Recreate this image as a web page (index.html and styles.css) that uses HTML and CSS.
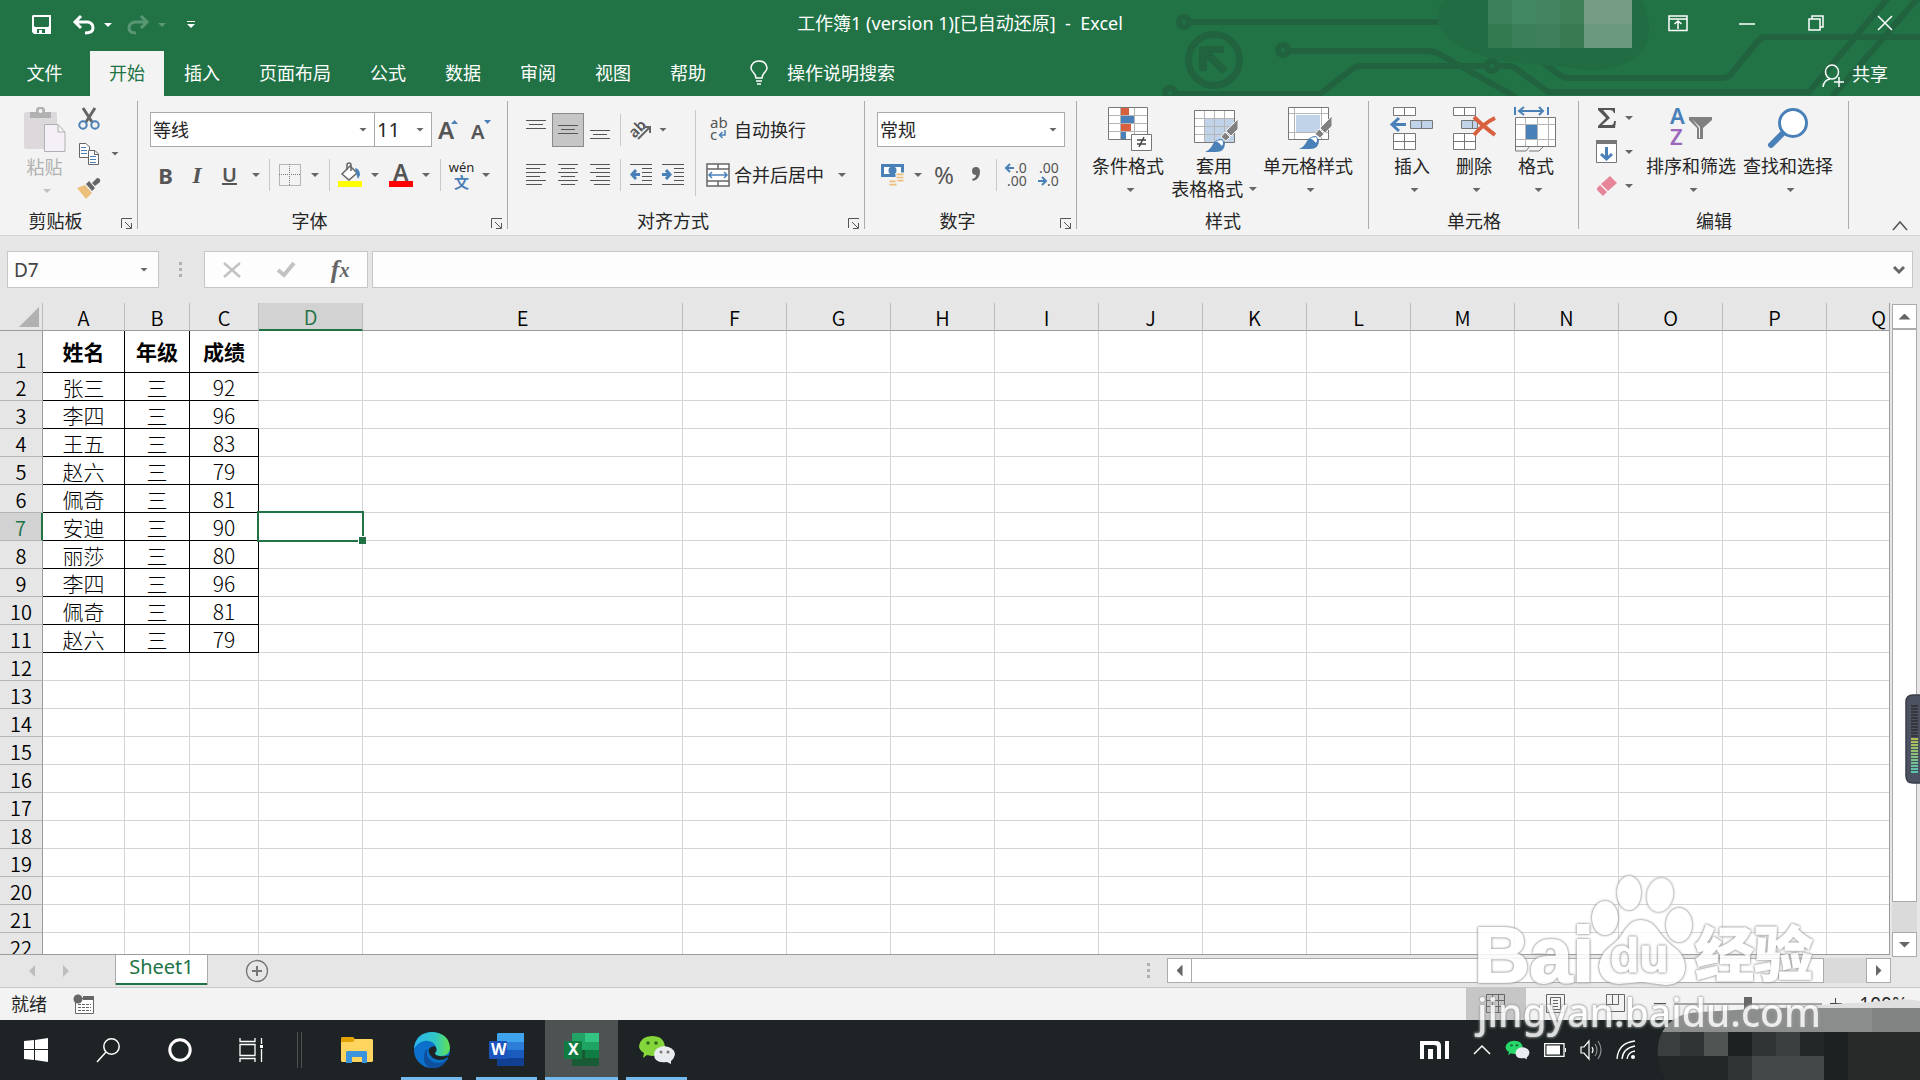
FILE: index.html
```html
<!DOCTYPE html>
<html lang="zh-CN">
<head>
<meta charset="utf-8">
<title>工作簿1 - Excel</title>
<link rel="stylesheet" href="styles.css">
</head>
<body>
<header class="top">
  <svg class="circuit" viewBox="1160 0 760 96" width="760" height="96" aria-hidden="true">
    <g fill="none" stroke="#22633f" stroke-width="6">
      <circle cx="1184" cy="22" r="5"/><path d="M1191 22H1438"/>
      <circle cx="1214" cy="60" r="25.500" stroke-width="7"/>
      <circle cx="1283" cy="50" r="5"/><path d="M1290 51H1428Q1433 51 1437 53L1516 97"/>
      <circle cx="1170" cy="93" r="5"/><path d="M1176 94H1320L1351 70Q1356 66 1361 66H1486"/>
      <circle cx="1492" cy="66" r="5"/><path d="M1498 66H1508Q1513 66 1518 70L1548 92H1809L1888 -2"/>
      <path d="M1542 62L1558 74Q1564 78 1570 78H1722Q1729 78 1732 73L1758 41Q1761 37 1766 37H1920"/>
      <path d="M1832 97L1918 -2"/>
    </g>
    <path fill="#22633f" d="M1199 46h25v7h-12l16 16-6 5-15-15v12h-8z"/>
    <path fill="#226c43" d="M1438 22Q1438 0 1446 0H1640Q1649 10 1649 28Q1649 50 1632 60Q1610 71 1590 71L1560 66Q1450 62 1438 22z"/>
    <path fill="#3b805a" d="M1488 0h24v24h-24z"/><path fill="#428860" d="M1512 0h24v24h-24z"/><path fill="#44845f" d="M1536 0h24v24h-24z"/><path fill="#3f8058" d="M1560 0h24v24h-24z"/>
    <path fill="#31794f" d="M1488 24h24v24h-24z"/><path fill="#3a7f58" d="M1512 24h24v24h-24z"/><path fill="#3f805a" d="M1536 24h24v24h-24z"/><path fill="#397a53" d="M1560 24h24v24h-24z"/>
    <path fill="#759d86" d="M1584 0h48v24h-48z"/><path fill="#6a987e" d="M1584 24h48v24h-48z"/>
  </svg>
  <div class="titlebar">
    <div class="quick">
      <button aria-label="保存"><svg width="20" height="20" viewBox="0 0 20 20"><path fill="#fff" fill-rule="evenodd" d="M1 0H19V19H2L0 17V1zM2 2V11L3 12H16L17 11V2zM5 14V18H7V15H10V18H13V14z"/></svg></button>
      <button aria-label="撤消"><svg width="23" height="20" viewBox="0 0 23 20"><path fill="none" stroke="#fff" stroke-width="3" d="M8 1L2 7L8 13M3 7H15Q20 8 20 13Q20 18 12 18"/></svg></button>
      <i class="ar white"></i>
      <button aria-label="恢复" class="faded"><svg width="23" height="20" viewBox="0 0 23 20"><path fill="none" stroke="#fff" stroke-width="3" d="M14 1L20 7L14 13M19 7H8Q2 8 2 13Q2 18 9 18"/></svg></button>
      <i class="ar white faded"></i>
      <button class="custom" aria-label="自定义快速访问工具栏"><svg width="8" height="8" viewBox="0 0 8 8"><path fill="#fff" d="M0 0h8v1H0zM0 3h8L4 7z"/></svg></button>
    </div>
    <h1>工作簿1 (version 1)[已自动还原] &nbsp;- &nbsp;Excel</h1>
    <div class="winbtns">
      <button aria-label="功能区显示选项"><svg width="20" height="17" viewBox="0 0 20 17"><path fill="none" stroke="#fff" stroke-width="1.500" d="M1 1H19V15.500H1zM1 4H19M10 14V6M6.500 9L10 6L13.500 9"/></svg></button>
      <button aria-label="最小化"><svg width="16" height="16" viewBox="0 0 16 16"><path stroke="#fff" stroke-width="1.500" d="M0 9H16"/></svg></button>
      <button aria-label="向下还原"><svg width="16" height="16" viewBox="0 0 16 16"><path fill="none" stroke="#fff" stroke-width="1.500" d="M1 4H12V15H1zM4 4V1H15V12H12"/></svg></button>
      <button aria-label="关闭"><svg width="16" height="16" viewBox="0 0 16 16"><path stroke="#fff" stroke-width="1.500" d="M1 1L15 15M15 1L1 15"/></svg></button>
    </div>
  </div>
  <nav class="tabs">
    <button class="file">文件</button><button class="on">开始</button><button>插入</button><button>页面布局</button><button>公式</button><button>数据</button><button>审阅</button><button>视图</button><button>帮助</button>
    <button class="tell"><svg width="18" height="26" viewBox="0 0 18 26"><path fill="none" stroke="#fff" stroke-width="1.500" d="M6 18Q6 15 3 12Q1 10 1 8Q2 1 9 1T17 8Q17 10 15 12Q12 15 12 18zM6 21H12M7 24H11"/></svg>操作说明搜索</button>
    <button class="share"><svg width="22" height="24" viewBox="0 0 22 24"><g fill="none" stroke="#fff" stroke-width="1.500"><ellipse cx="10" cy="8" rx="6.500" ry="7"/><path d="M1 23Q2 16 8 15M12 18H22M17 13V23"/></g></svg>共享</button>
  </nav>
</header>

<section class="ribbon">
  <div class="group g-clip">
    <div class="body">
      <button class="big paste" disabled><svg width="42" height="45" viewBox="0 0 42 45"><rect x="0" y="5" width="33" height="37" rx="2" fill="#dcd8dc"/><path fill="#b1b1b1" d="M6 5h6V2l2-2h5l2 2v3h6v6H6z"/><circle cx="16.500" cy="4" r="2" fill="#f3f3f3"/><path fill="#f5f0f7" stroke="#b1b1b1" d="M20.500 17.500H34L41 25V44.500H20.500zM34 17.500V25H41"/></svg><span>粘贴</span><i class="ar"></i></button>
      <div class="stack">
        <div><button aria-label="剪切"><svg width="22" height="24" viewBox="0 0 22 24"><path stroke="#666" stroke-width="3" d="M5 1L14 15M17 1L8 15"/><g fill="none" stroke="#4a80b8" stroke-width="2"><circle cx="5" cy="18" r="3.700"/><circle cx="17" cy="18" r="3.700"/></g></svg></button></div>
        <div><button aria-label="复制"><svg width="22" height="24" viewBox="0 0 22 24"><g fill="#fff" stroke="#666"><path d="M1.500 1.500H8L11.500 5V15.500H1.500z"/><path d="M10.500 8.500H17L20.500 12V22.500H10.500zM16.500 8.500V12.500H20.500"/></g><path stroke="#4a80b8" d="M3 5.500H8M3 8.500H9M3 11.500H9M12 14.500H18M12 17.500H18M12 20.500H18"/></svg></button><i class="ar"></i></div>
        <div><button aria-label="格式刷"><svg width="24" height="22" viewBox="0 0 24 22"><path fill="#ecc07a" d="M0 10L8 7L15 15L9 21z"/><path fill="#666" d="M9 6L12 3L18 10L15 13zM15 5L20 0Q24 0 23 4L18 8z"/></svg></button></div>
      </div>
    </div>
    <div class="glabel"><span>剪贴板</span><button class="launch" aria-label="剪贴板设置"><svg width="12" height="12" viewBox="0 0 12 12"><path fill="none" stroke="#555" d="M.5 10V.5H11M4 4L10 10M10.500 5V10.500H5"/></svg></button></div>
  </div>

  <div class="group g-font">
    <div class="body rows">
      <div class="r1">
        <label class="combo c-font"><select aria-label="字体"><option>等线</option></select><i class="ar"></i></label><label class="combo c-size"><select aria-label="字号"><option>11</option></select><i class="ar"></i></label>
        <button class="grow" aria-label="增大字号"><svg width="22" height="24" viewBox="0 0 22 24"><text x="0" y="21" class="ltr" font-size="24">A</text><path fill="#4a80b8" d="M13 6h7l-3.500-4z"/></svg></button>
        <button class="grow" aria-label="减小字号"><svg width="22" height="24" viewBox="0 0 22 24"><text x="0" y="21" class="ltr" font-size="20">A</text><path fill="#4a80b8" d="M13 2h7l-3.500 4z"/></svg></button>
      </div>
      <div class="r2 font2">
        <button class="b">B</button><button class="it">I</button><button class="u">U</button><i class="ar"></i><i class="vs"></i>
        <button aria-label="边框"><svg width="22" height="22" viewBox="0 0 22 22"><path fill="none" stroke="#777" stroke-dasharray="1 1" d="M.5 .5H21.500V21.500H.5zM10.500 0V22M0 10.500H22"/></svg></button><i class="ar"></i><i class="vs"></i>
        <button aria-label="填充颜色"><svg width="24" height="26" viewBox="0 0 24 26"><path fill="#fff" stroke="#666" stroke-width="1.500" d="M4 12L12 4L19 11L11 18z"/><path fill="none" stroke="#666" stroke-width="1.500" d="M9 8V3Q9 1 11 1T13 3V9"/><path fill="#4a80b8" d="M17 6Q22 7 22 13L20 17Q18 12 17 6z"/><path fill="#ff0" d="M0 19h24v6H0z"/></svg></button><i class="ar"></i>
        <button aria-label="字体颜色"><svg width="24" height="26" viewBox="0 0 24 26"><text x="4" y="19" class="ltr" font-size="23">A</text><path fill="red" d="M0 19h24v6H0z"/></svg></button><i class="ar"></i><i class="vs"></i>
        <button class="wen" aria-label="拼音"><span>wén</span><b>文</b></button><i class="ar"></i>
      </div>
    </div>
    <div class="glabel"><span>字体</span><button class="launch" aria-label="字体设置"><svg width="12" height="12" viewBox="0 0 12 12"><path fill="none" stroke="#555" d="M.5 10V.5H11M4 4L10 10M10.500 5V10.500H5"/></svg></button></div>
  </div>

  <div class="group g-align">
    <div class="body">
      <div class="rows">
        <div class="r1 al">
          <button aria-label="顶端对齐"><svg width="20" height="22" viewBox="0 0 20 22"><path stroke="#555" d="M0 1.500H20M3 5.500H17M0 9.500H20"/></svg></button>
          <button class="sel" aria-label="垂直居中"><svg width="20" height="22" viewBox="0 0 20 22"><path stroke="#555" d="M0 6.500H20M3 10.500H17M0 14.500H20"/></svg></button>
          <button aria-label="底端对齐"><svg width="20" height="22" viewBox="0 0 20 22"><path stroke="#555" d="M0 11.500H20M3 15.500H17M0 19.500H20"/></svg></button>
          <i class="vs"></i>
          <button aria-label="方向"><svg width="22" height="22" viewBox="0 0 22 22"><text x="0" y="15" class="ltr" font-size="15" transform="rotate(-45 8 12)">ab</text><path fill="none" stroke="#666" stroke-width="2" d="M8 20L19 9M13 8H20V14"/></svg></button><i class="ar"></i>
        </div>
        <div class="r2 al al2">
          <button aria-label="左对齐"><svg width="20" height="22" viewBox="0 0 20 22"><path stroke="#555" d="M0 .5H20M0 4.500H14M0 8.500H20M0 12.500H14M0 16.500H20M0 20.500H16"/></svg></button>
          <button aria-label="居中"><svg width="20" height="22" viewBox="0 0 20 22"><path stroke="#555" d="M0 .5H20M3 4.500H17M0 8.500H20M3 12.500H17M0 16.500H20M3 20.500H17"/></svg></button>
          <button aria-label="右对齐"><svg width="20" height="22" viewBox="0 0 20 22"><path stroke="#555" d="M0 .5H20M6 4.500H20M0 8.500H20M6 12.500H20M0 16.500H20M4 20.500H20"/></svg></button>
          <i class="vs"></i>
          <button aria-label="减少缩进量"><svg width="22" height="22" viewBox="0 0 22 22"><path stroke="#555" d="M0 .5H22M12 4.500H22M12 8.500H22M12 12.500H22M12 16.500H22M0 20.500H22"/><path fill="none" stroke="#4a80b8" stroke-width="3" d="M6 6L2 10.500L6 15M2 10.500H10"/></svg></button>
          <button aria-label="增加缩进量"><svg width="22" height="22" viewBox="0 0 22 22"><path stroke="#555" d="M0 .5H22M12 4.500H22M12 8.500H22M12 12.500H22M12 16.500H22M0 20.500H22"/><path fill="none" stroke="#4a80b8" stroke-width="3" d="M4 6L8 10.500L4 15M0 10.500H8"/></svg></button>
        </div>
      </div>
      <i class="vs tall"></i>
      <div class="rows">
        <button class="r1 wide"><svg width="24" height="26" viewBox="0 0 24 26"><text x="4" y="11" class="ltr reg" font-size="15">ab</text><text x="4" y="23" class="ltr reg" font-size="15">c</text><path fill="none" stroke="#4a80b8" stroke-width="1.500" d="M19 13V18H14M16.500 15L13.500 18L16.500 21"/></svg>自动换行</button>
        <button class="r2 wide"><svg width="24" height="24" viewBox="0 0 24 24"><path fill="#fff" stroke="#666" stroke-width="1.500" d="M1 1H23V23H1zM1 6H23M1 18H23M12 1V6M12 18V23"/><path fill="none" stroke="#4a80b8" stroke-width="1.500" d="M3 12H21M6 9L3 12L6 15M18 9L21 12L18 15"/></svg>合并后居中<i class="ar"></i></button>
      </div>
    </div>
    <div class="glabel"><span>对齐方式</span><button class="launch" aria-label="对齐设置"><svg width="12" height="12" viewBox="0 0 12 12"><path fill="none" stroke="#555" d="M.5 10V.5H11M4 4L10 10M10.500 5V10.500H5"/></svg></button></div>
  </div>

  <div class="group g-num">
    <div class="body rows">
      <div class="r1"><label class="combo c-num"><select aria-label="数字格式"><option>常规</option></select><i class="ar"></i></label></div>
      <div class="r2 num2">
        <button aria-label="会计数字格式"><svg width="24" height="24" viewBox="0 0 24 24"><path fill="#4a80b8" d="M0 1h23v13H0z"/><path fill="#fff" d="M3 4h17v7H3z"/><circle cx="11.500" cy="7.500" r="4" fill="#4a80b8"/><path fill="#ecc07a" stroke="#f3f3f3" d="M15 10h8v3h-8zM15 13h8v3h-8zM15 16h8v3h-8zM8 17h8v3H8zM8 20h8v3H8z"/></svg></button><i class="ar"></i>
        <button class="pct">%</button>
        <button aria-label="千位分隔样式"><svg width="10" height="16" viewBox="0 0 10 16"><path fill="#666" d="M5 0Q9 0 9 5Q9 12 2 14L1 12Q5 11 5 8Q1 8 1 4Q1 0 5 0z"/></svg></button>
        <i class="vs"></i>
        <button aria-label="增加小数位数"><svg width="24" height="26" viewBox="0 0 24 26"><text x="10" y="11" class="ltr reg" font-size="14">.0</text><text x="2" y="24" class="ltr reg" font-size="14">.00</text><path fill="none" stroke="#4a80b8" stroke-width="2" d="M5 2L1 6L5 10M1 6H9"/></svg></button>
        <button aria-label="减少小数位数"><svg width="24" height="26" viewBox="0 0 24 26"><text x="2" y="11" class="ltr reg" font-size="14">.00</text><text x="10" y="24" class="ltr reg" font-size="14">.0</text><path fill="none" stroke="#4a80b8" stroke-width="2" d="M5 15L9 19L5 23M1 19H9"/></svg></button>
      </div>
    </div>
    <div class="glabel"><span>数字</span><button class="launch" aria-label="数字设置"><svg width="12" height="12" viewBox="0 0 12 12"><path fill="none" stroke="#555" d="M.5 10V.5H11M4 4L10 10M10.500 5V10.500H5"/></svg></button></div>
  </div>

  <div class="group g-style">
    <div class="body">
      <button class="big"><svg width="44" height="44" viewBox="0 0 44 44"><path fill="#fff" d="M0 0h40v33H0z"/><path stroke="#b5b5b5" fill="none" d="M0 8.500H40M0 16.500H40M0 24.500H40M12.500 0V33M26.500 0V33"/><path fill="none" stroke="#777" d="M.5 .5H39.500V32.500H.5z"/><path fill="#d9603f" d="M13 1h8v7h-8zM13 17h10v7H13z"/><path fill="#4a80b8" d="M13 9h13v7H13zM13 25h5v7h-5z"/><path fill="#fff" stroke="#777" d="M23.500 27.500h20v16h-20z"/><path fill="none" stroke="#444" stroke-width="1.500" d="M29 33H38M29 37H38M36 30L31 40"/></svg><span>条件格式</span><i class="ar"></i></button>
      <button class="big"><svg width="44" height="44" viewBox="0 0 44 44"><path fill="#fff" d="M0 3h40v33H0z"/><path fill="#c0d3e9" d="M10 11h30v25H10z"/><path stroke="#b5b5b5" fill="none" d="M0 11.500H40M0 19.500H40M0 27.500H40M10.500 3V36M20.500 3V36M30.500 3V36"/><path fill="none" stroke="#777" d="M.5 3.500H40.500V35.500H.5z"/><path fill="#808080" stroke="#f3f3f3" d="M44 12V22L37 29L32 24zM31 25L36 30L32 34L27 30z"/><path fill="#4a80b8" d="M11 45Q17 42 19 37Q22 32 28 32L31 36Q31 46 20 45z"/><path fill="#fff" d="M22 34L28 33Q30 36 28 39Q26 36 22 34z"/></svg><span>套用<br>表格格式 <i class="ar"></i></span></button>
      <button class="big"><svg width="44" height="44" viewBox="0 0 44 44"><path fill="#fff" d="M0 0h40v33H0z"/><path fill="#c0d3e9" d="M8 8h24v17H8z"/><path stroke="#b5b5b5" fill="none" d="M0 6.500H40M0 25.500H40M6.500 0V33M33.500 0V33"/><path fill="none" stroke="#777" d="M.5 .5H40.500V32.500H.5z"/><path fill="#808080" stroke="#f3f3f3" d="M44 9V19L37 26L32 21zM31 22L36 27L32 31L27 27z"/><path fill="#4a80b8" d="M11 42Q17 39 19 34Q22 29 28 29L31 33Q31 43 20 42z"/><path fill="#fff" d="M22 31L28 30Q30 33 28 36Q26 33 22 31z"/></svg><span>单元格样式</span><i class="ar"></i></button>
    </div>
    <div class="glabel"><span>样式</span></div>
  </div>

  <div class="group g-cell">
    <div class="body">
      <button class="big"><svg width="44" height="44" viewBox="0 0 44 44"><g fill="#fff" stroke="#777"><path d="M3.500 .5h22v8h-22zM14.500 .5v8M3.500 26.500h22v16h-22zM14.500 26.500v16M3.500 34.500h22"/><path fill="#c0d3e9" d="M20.500 13.500h22v8h-22zM31.500 13.500v8"/></g><path fill="none" stroke="#4a80b8" stroke-width="3" d="M16 17.500H3M9 11L2 17.500L9 24"/></svg><span>插入</span><i class="ar"></i></button>
      <button class="big"><svg width="44" height="44" viewBox="0 0 44 44"><g fill="#fff" stroke="#777"><path d="M1.500 .5h22v8h-22zM12.500 .5v8M1.500 26.500h22v16h-22zM12.500 26.500v16M1.500 34.500h22"/><path fill="#c0d3e9" d="M9.500 13.500h16v8h-16zM20.500 13.500v8"/></g><path fill="none" stroke="#d9603f" stroke-width="4" d="M22 10Q30 18 43 28M43 11Q32 16 22 28"/></svg><span>删除</span><i class="ar"></i></button>
      <button class="big"><svg width="44" height="44" viewBox="0 0 44 44"><path fill="none" stroke="#4a80b8" stroke-width="2" d="M5 4H29M10 0L5 4L10 8M25 0L29 4L25 8M1 0V8M34 0V8"/><path fill="#fff" d="M1 10h40v30H1z"/><path fill="none" stroke="#b5b5b5" d="M1 17.500H41M1 32.500H41M11.500 10V39M23.500 10V39M34.500 10V39"/><path fill="#4a80b8" d="M12 18h11v14H12z"/><path fill="none" stroke="#777" d="M1.500 10.500H41.500V39.500H1.500zM1.500 39V44H12L16 39M15 44H25L30 39"/></svg><span>格式</span><i class="ar"></i></button>
    </div>
    <div class="glabel"><span>单元格</span></div>
  </div>

  <div class="group g-edit">
    <div class="body">
      <div class="stack">
        <div><button aria-label="自动求和"><svg width="22" height="22" viewBox="0 0 22 22"><path fill="#555" d="M2 1H19V6H18Q17 3 14 3H7L14 11L6 18H15Q18 18 18 14H20L19 21H2V19L10 11L2 3z"/></svg></button><i class="ar"></i></div>
        <div><button aria-label="填充"><svg width="22" height="24" viewBox="0 0 22 24"><path fill="#fff" stroke="#777" d="M.5 .5h20v22H.5z"/><path fill="#777" d="M0 0h21v4H0z"/><path fill="none" stroke="#4a80b8" stroke-width="3" d="M10.500 7V19M5 14L10.500 19L16 14"/></svg></button><i class="ar"></i></div>
        <div><button aria-label="清除"><svg width="22" height="22" viewBox="0 0 22 22"><path fill="#e78598" d="M14 1L21 8L12 16L5 9zM4 10L11 17L7 21L1 15V13z"/></svg></button><i class="ar"></i></div>
      </div>
      <button class="big"><svg width="44" height="44" viewBox="0 0 44 44"><text x="1" y="17" font-size="22" font-weight="600" fill="#4a80b8" class="az">A</text><text x="1" y="38" font-size="22" font-weight="600" fill="#9b68bb" class="az">Z</text><path fill="#808080" d="M20 10H43V13L34 21V32H28V21L20 13z"/><path fill="#f3f3f3" d="M23 12L31 20V31H30V21z"/></svg><span>排序和筛选</span><i class="ar"></i></button>
      <button class="big"><svg width="44" height="44" viewBox="0 0 44 44"><circle cx="27" cy="16" r="13.500" fill="#fff" stroke="#4a80b8" stroke-width="3"/><path stroke="#4a80b8" stroke-width="6" stroke-linecap="round" d="M16 27L5 38"/></svg><span>查找和选择</span><i class="ar"></i></button>
    </div>
    <div class="glabel"><span>编辑</span></div>
  </div>
  <button class="collapse" aria-label="折叠功能区"><svg width="16" height="10" viewBox="0 0 16 10"><path fill="none" stroke="#555" stroke-width="1.500" d="M1 9L8 1L15 9"/></svg></button>
</section>

<section class="fbar">
  <label class="namebox"><input type="text" value="D7" aria-label="名称框"><i class="ar"></i></label>
  <i class="dots"></i>
  <div class="fx">
    <button aria-label="取消"><svg width="18" height="16" viewBox="0 0 18 16"><path stroke="#c2c2c2" stroke-width="2.500" d="M1 1L17 15M17 1L1 15"/></svg></button>
    <button aria-label="输入"><svg width="20" height="16" viewBox="0 0 20 16"><path fill="none" stroke="#c2c2c2" stroke-width="4" d="M2 8L8 13L18 1"/></svg></button>
    <button class="fxi" aria-label="插入函数">f<sub>x</sub></button>
  </div>
  <label class="formula"><input type="text" aria-label="编辑栏"><svg width="12" height="10" viewBox="0 0 12 10"><path fill="none" stroke="#666" stroke-width="3" d="M1 2L6 7L11 2"/></svg></label>
</section>

<main class="sheet">
  <div class="gridwin">
    <table>
      <colgroup><col class="rh"><col class="ca"><col class="cb"><col class="cc"><col class="cd"><col class="ce"><col class="cd" span="12"></colgroup>
      <thead><tr><th class="corner"><svg width="20" height="20" viewBox="0 0 20 20"><path fill="#b1b1b1" d="M20 0V20H0z"/></svg><th>A<th>B<th>C<th class="on">D<th>E<th>F<th>G<th>H<th>I<th>J<th>K<th>L<th>M<th>N<th>O<th>P<th>Q</tr></thead>
      <tbody>
      <tr class="head"><th>1<td class="k">姓名<td class="k">年级<td class="k open">成绩<td><td><td><td><td> <td><td><td><td><td> <td><td><td><td>
      <tr><th>2<td class="k">张三<td class="k">三<td class="k open">92<td><td><td><td><td> <td><td><td><td><td> <td><td><td><td>
      <tr><th>3<td class="k">李四<td class="k">三<td class="k open">96<td><td><td><td><td> <td><td><td><td><td> <td><td><td><td>
      <tr><th>4<td class="k">王五<td class="k">三<td class="k">83<td><td><td><td><td> <td><td><td><td><td> <td><td><td><td>
      <tr><th>5<td class="k">赵六<td class="k">三<td class="k">79<td><td><td><td><td> <td><td><td><td><td> <td><td><td><td>
      <tr><th>6<td class="k">佩奇<td class="k">三<td class="k">81<td><td><td><td><td> <td><td><td><td><td> <td><td><td><td>
      <tr><th class="on">7<td class="k">安迪<td class="k">三<td class="k">90<td class="active"><td><td><td><td> <td><td><td><td><td> <td><td><td><td>
      <tr><th>8<td class="k">丽莎<td class="k">三<td class="k">80<td><td><td><td><td> <td><td><td><td><td> <td><td><td><td>
      <tr><th>9<td class="k">李四<td class="k">三<td class="k">96<td><td><td><td><td> <td><td><td><td><td> <td><td><td><td>
      <tr><th>10<td class="k">佩奇<td class="k">三<td class="k">81<td><td><td><td><td> <td><td><td><td><td> <td><td><td><td>
      <tr><th>11<td class="k">赵六<td class="k">三<td class="k">79<td><td><td><td><td> <td><td><td><td><td> <td><td><td><td>
      <tr><th>12<td><td><td> <td><td><td><td><td> <td><td><td><td><td> <td><td><td><td>
      <tr><th>13<td><td><td> <td><td><td><td><td> <td><td><td><td><td> <td><td><td><td>
      <tr><th>14<td><td><td> <td><td><td><td><td> <td><td><td><td><td> <td><td><td><td>
      <tr><th>15<td><td><td> <td><td><td><td><td> <td><td><td><td><td> <td><td><td><td>
      <tr><th>16<td><td><td> <td><td><td><td><td> <td><td><td><td><td> <td><td><td><td>
      <tr><th>17<td><td><td> <td><td><td><td><td> <td><td><td><td><td> <td><td><td><td>
      <tr><th>18<td><td><td> <td><td><td><td><td> <td><td><td><td><td> <td><td><td><td>
      <tr><th>19<td><td><td> <td><td><td><td><td> <td><td><td><td><td> <td><td><td><td>
      <tr><th>20<td><td><td> <td><td><td><td><td> <td><td><td><td><td> <td><td><td><td>
      <tr><th>21<td><td><td> <td><td><td><td><td> <td><td><td><td><td> <td><td><td><td>
      <tr><th>22<td><td><td> <td><td><td><td><td> <td><td><td><td><td> <td><td><td><td>
      </tbody>
    </table>
  </div>
  <div class="vscroll">
    <button aria-label="向上滚动"><i class="ar up"></i></button><div class="thumb"></div><div class="track"></div><button aria-label="向下滚动"><i class="ar scr"></i></button>
  </div>
</main>

<section class="sheetbar">
  <button class="nav" aria-label="上一个工作表"><i class="tl"></i></button><button class="nav" aria-label="下一个工作表"><i class="tr"></i></button>
  <button class="stab">Sheet1</button>
  <button class="add" aria-label="新工作表"><svg width="24" height="24" viewBox="0 0 24 24"><circle cx="12" cy="12" r="10.500" fill="none" stroke="#777" stroke-width="1.300"/><path stroke="#777" stroke-width="2" d="M7 12H17M12 7V17"/></svg></button>
  <i class="dots"></i>
  <div class="hscroll"><button aria-label="向左滚动"><i class="tl dk"></i></button><div class="thumb"></div><div class="track"></div><button aria-label="向右滚动"><i class="tr dk"></i></button></div>
</section>

<section class="status">
  <span>就绪</span>
  <button class="macro" aria-label="录制宏"><svg width="20" height="20" viewBox="0 0 20 20"><path fill="#fff" stroke="#666" d="M1.500 4.500H19.500V19.500H1.500z"/><circle cx="4" cy="5" r="4.500" fill="#666"/><path fill="#666" d="M9 2H20V6H9z"/><path stroke="#666" stroke-dasharray="3 1" d="M4 10.500H17M4 13.500H17M4 16.500H17"/></svg></button>
  <button class="view on" aria-label="普通"><svg width="20" height="20" viewBox="0 0 20 20"><path fill="none" stroke="#666" d="M.5 .5H18.500V18.500H.5zM.5 6.500H18.500M.5 12.500H18.500M6.500 .5V18.500M12.500 .5V18.500"/></svg></button>
  <button class="view" aria-label="页面布局"><svg width="20" height="20" viewBox="0 0 20 20"><path fill="none" stroke="#666" d="M.5 .5H18.500V18.500H.5zM4.500 3.500H14.500V15.500H4.500zM7 6.500H12M7 9.500H12M7 12.500H12"/></svg></button>
  <button class="view" aria-label="分页预览"><svg width="20" height="20" viewBox="0 0 20 20"><path fill="none" stroke="#666" d="M.5 .5H18.500V17.500H.5zM.5 10.500H12.500V.5M6.500 .5V10.500"/></svg></button>
  <button class="zm" aria-label="缩小"><svg width="12" height="12" viewBox="0 0 12 12"><path stroke="#444" d="M0 5.500H12"/></svg></button>
  <input type="range" min="0" max="100" value="50" aria-label="显示比例">
  <button class="zm" aria-label="放大"><svg width="12" height="12" viewBox="0 0 12 12"><path stroke="#444" d="M0 5.500H12M5.500 0V12"/></svg></button>
  <button class="pc">100%</button>
</section>

<footer class="taskbar">
  <button aria-label="开始"><svg width="24" height="24" viewBox="0 0 24 24"><path fill="#fff" d="M0 3L10 2V11H0zM11 2L24 0V11H11zM0 12H10V22L0 21zM11 12H24V24L11 22z"/></svg></button>
  <button aria-label="搜索"><svg width="24" height="24" viewBox="0 0 24 24"><g fill="none" stroke="#fff" stroke-width="1.500"><circle cx="15.500" cy="8.500" r="7.700"/><path d="M10 14L1 24"/></g></svg></button>
  <button aria-label="Cortana"><svg width="24" height="24" viewBox="0 0 24 24"><circle cx="12" cy="12" r="10.200" fill="none" stroke="#fff" stroke-width="3"/></svg></button>
  <button aria-label="任务视图"><svg width="26" height="24" viewBox="0 0 26 24"><path fill="none" stroke="#fff" stroke-width="1.300" d="M1 0V3.500H16V0M1 6.500H16V17.500H1zM1 24V20.500H16V24M22.500 0V6M22.500 11V24"/><path fill="#fff" d="M21 7h3v3h-3z"/></svg></button>
  <i class="tsep"></i>
  <button class="app" aria-label="文件资源管理器"><svg width="32" height="27" viewBox="0 0 32 27"><path fill="#e2a300" d="M0 1L1 0H12L15 3L13 6H0z"/><path fill="#ffd45f" d="M0 5H12L14 2H31L32 3V24L31 25H1L0 24z"/><path fill="#3b94dc" d="M6 14H25L26 15V26H21V20H11V26H5V15z"/></svg></button>
  <button class="app run" aria-label="Edge"><svg width="36" height="36" viewBox="0 0 36 36"><defs><linearGradient id="e1"><stop offset="0" stop-color="#2bb4ee"/><stop offset=".6" stop-color="#31c7c4"/><stop offset="1" stop-color="#62e34d"/></linearGradient></defs><circle cx="18" cy="18" r="18" fill="#0b71ca"/><path fill="#0e4f9e" d="M14 17Q10 25 19 30Q27 33 33 27Q29 37 18 36Q9 34 10 25Q10 18 14 17z"/><path fill="url(#e1)" d="M0 17Q1 1 18 0Q35 1 36 16Q35 24 27 24Q21 24 21 21Q24 18 21 13Q17 8 10 9Q3 11 0 17z"/><path fill="#1e2425" d="M21 14Q13 15 15 21Q18 28 26 28Q31 28 34 25L36 28V23Q31 25 25 24Q20 23 21 21Q24 18 21 14z"/></svg></button>
  <button class="app run" aria-label="Word"><svg width="36" height="34" viewBox="0 0 36 34"><path fill="#3fa3ee" d="M9 0H35V9H8V1z"/><path fill="#2c7dd8" d="M8 9H35V17H8z"/><path fill="#1a5bc0" d="M8 17H35V25H8z"/><path fill="#113f92" d="M8 25H35V33H8z"/><rect y="8" width="18" height="18" rx="1" fill="#1c53bd"/><text x="2" y="22" class="logo">W</text></svg></button>
  <button class="app run cur" aria-label="Excel"><svg width="36" height="34" viewBox="0 0 36 34"><path fill="#22a366" d="M9 0H22V17H8V1z"/><path fill="#34c481" d="M21 0H35V9H21z"/><path fill="#1ea362" d="M21 9H35V17H21z"/><path fill="#107c41" d="M21 17H35V25H21z"/><path fill="#195b35" d="M8 17H21V25H35V33H8z"/><rect y="8" width="18" height="18" rx="1" fill="#107c41"/><text x="4" y="22" class="logo">X</text></svg></button>
  <button class="app run" aria-label="微信"><svg width="36" height="30" viewBox="0 0 36 30"><path fill="#84d63a" d="M13 1Q25 1 26 12Q25 21 13 21L8 20L4 23L5 18Q0 15 0 11Q2 1 13 1z"/><path fill="#e9ecee" d="M25 11Q35 12 36 19Q35 24 32 26L32 29L28 27Q15 29 15 19Q16 12 25 11z"/><g fill="#2c6b1c"><circle cx="9" cy="8" r="1.800"/><circle cx="17" cy="8" r="1.800"/></g><g fill="#777"><circle cx="22" cy="17" r="1.500"/><circle cx="29" cy="17" r="1.500"/></g></svg></button>
  <div class="tray">
    <svg class="mi" width="30" height="18" viewBox="0 0 30 18"><path fill="#fff" d="M0 0H16Q21 0 21 5V18H17V6Q17 4 14 4H4V18H0zM8 8H13V18H8zM25 0H29V18H25z"/></svg>
    <svg width="18" height="10" viewBox="0 0 18 10"><path fill="none" stroke="#fff" stroke-width="1.500" d="M1 9L9 1L17 9"/></svg>
    <svg width="25" height="20" viewBox="0 0 36 30"><path fill="#28d769" d="M13 1Q25 1 26 12Q25 21 13 21L8 20L4 23L5 18Q0 15 0 11Q2 1 13 1z"/><path fill="#e9ecee" d="M25 11Q35 12 36 19Q35 24 32 26L32 29L28 27Q15 29 15 19Q16 12 25 11z"/><g fill="#11692f"><circle cx="9" cy="8" r="1.800"/><circle cx="17" cy="8" r="1.800"/></g></svg>
    <svg width="22" height="14" viewBox="0 0 22 14"><path fill="none" stroke="#fff" stroke-width="1.300" d="M.7 .7H20V13.300H.7z"/><path fill="#fff" d="M2.500 2.500H16V11.500H2.500zM21 5h1v4h-1z"/></svg>
    <svg width="22" height="20" viewBox="0 0 22 20"><path fill="none" stroke="#fff" stroke-width="1.200" d="M1 7H4L9 1V19L4 13H1zM12 7Q14 10 12 13"/><path fill="none" stroke="#8b8f90" stroke-width="1.200" d="M15 4Q19 10 15 16M18 1Q24 10 18 19"/></svg>
    <svg width="20" height="20" viewBox="0 0 20 20"><path fill="none" stroke="#fff" stroke-width="1.300" d="M1 19Q2 3 19 1M6 19Q7 8 19 6M11 19Q12 12 19 11"/><circle cx="17" cy="17" r="2" fill="#fff"/></svg>
  </div>
</footer>

<svg class="mosaic" viewBox="1656 990 264 90" width="264" height="90" aria-hidden="true">
  <defs><clipPath id="blob"><path d="M1666 1080Q1656 1066 1658 1046Q1660 1028 1676 1018Q1684 1013 1700 1012L1790 1007L1850 1003Q1875 1002 1890 1000Q1908 998 1920 1001V1080z"/></clipPath></defs>
  <g clip-path="url(#blob)">
    <path fill="#dfdfdf" d="M1656 990h264v18h-264z"/><path fill="#8b8c8c" d="M1656 1008h216v24h-216z"/><path fill="#828383" d="M1872 1008h48v24h-48z"/>
    <path fill="#232728" d="M1656 1032h264v48h-264z"/>
    <path fill="#3a3f40" d="M1656 1032h24v24h-24zM1776 1032h24v24h-24z"/><path fill="#303333" d="M1680 1032h24v24h-24zM1728 1056h24v24h-24z"/><path fill="#505453" d="M1704 1032h24v24h-24z"/><path fill="#1c2122" d="M1728 1032h24v24h-24zM1824 1032h24v48h-24z"/><path fill="#303435" d="M1752 1032h24v24h-24z"/><path fill="#444748" d="M1752 1056h72v24h-72z"/><path fill="#272929" d="M1848 1032h72v48h-72z"/>
  </g>
</svg>

<svg class="mark" viewBox="1470 870 360 180" width="360" height="180" aria-hidden="true">
  <g class="wm">
    <ellipse cx="1605" cy="918" rx="12" ry="16"/><ellipse cx="1629" cy="893" rx="11" ry="16"/><ellipse cx="1660" cy="895" rx="12" ry="16" transform="rotate(12 1660 895)"/><ellipse cx="1679" cy="925" rx="12" ry="16"/>
    <path d="M1641 921Q1651 921 1658 932Q1666 943 1676 950Q1685 958 1684 970Q1681 984 1665 984L1642 981L1619 983Q1601 982 1600 966Q1601 955 1611 947Q1620 941 1626 930Q1632 921 1641 921z"/>
    <text x="1474" y="982" class="w1">Bai</text>
    <text x="1610" y="972" class="w2">du</text>
    <text x="1695" y="976" class="w3">经验</text>
    <text x="1477" y="1027" class="w4">jingyan.baidu.com</text>
  </g>
</svg>

<svg class="meter" width="15" height="90" viewBox="0 0 15 90" aria-hidden="true"><defs><linearGradient id="m" x1="0" x2="0" y1="0" y2="1"><stop offset="0" stop-color="#b7c04f"/><stop offset="1" stop-color="#55c4ae"/></linearGradient></defs><path fill="#4d5262" stroke="#3a3d48" stroke-width="1.500" d="M16 1H8Q1 1 1 8V82Q1 89 8 89H16z"/><path stroke="#35383f" stroke-width="7" stroke-dasharray="2 1" d="M9.500 11V44"/><path fill="url(#m)" d="M6 44h7v35H6z"/><path stroke="#4d5262" stroke-width="8" stroke-dasharray="1 2" d="M9.500 46V79"/></svg>
</body>
</html>
```
FILE: styles.css
```css
* { box-sizing: border-box; }
body {
  margin: 0; height: 100vh; display: flex; flex-direction: column; overflow: hidden; position: relative;
  font: 18px/24px "Noto Sans", "Noto Sans CJK SC", sans-serif; color: #262626; background: #e6e6e6;
}
button { border: 0; background: none; padding: 0; margin: 0; font: inherit; color: inherit; display: flex; align-items: center; justify-content: center; }
input, select { font: inherit; color: inherit; border: 0; background: none; padding: 0; margin: 0; outline: 0; min-width: 0; }
svg { display: block; flex: none; overflow: visible; }
.ar { display: inline-block; flex: none; width: 8px; height: 4px; background: #666; clip-path: polygon(0 0, 100% 0, 50% 100%); }
.ar.white { background: #fff; }
.faded { opacity: .25; }
.ar.up { width: 12px; height: 6px; clip-path: polygon(50% 0, 100% 100%, 0 100%); }
.ar.scr { width: 12px; height: 6px; }
.vs { width: 1px; height: 32px; background: #c8c8c8; }

/* title and tabs */
.top { position: relative; background: #217346; color: #fff; flex: none; }
.circuit { position: absolute; right: 0; top: 0; overflow: hidden; }
.titlebar { position: relative; height: 51px; display: grid; grid-template-columns: 1fr auto 1fr; padding-bottom: 5px; align-items: center; }
.titlebar h1 { margin: 0; font-size: 18px; font-weight: 400; }
.quick { display: flex; align-items: center; padding: 4px 0 0 32px; gap: 8px; }
.quick button:first-child { margin-right: 13px; }
.quick .ar { margin-right: 7px; }
.quick .custom { margin-left: 6px; }
.winbtns { display: flex; justify-content: flex-end; padding-right: 1px; }
.winbtns button { width: 69px; height: 46px; }
.tabs { position: relative; display: flex; height: 45px; gap: 1px; }
.tabs button { padding: 0 19px 2px; }
.tabs .file { padding-left: 0; padding-right: 0; width: 89px; }
.tabs .on { background: #f3f3f3; color: #217346; }
.tabs .tell { gap: 19px; padding-left: 24px; }
.tabs .share { margin-left: auto; gap: 8px; padding: 0 32px 0 0; align-items: center; }
.share svg { margin-top: 4px; }

/* ribbon */
.ribbon { display: flex; flex: none; background: #f3f3f3; border-bottom: 1px solid #d2d2d2; padding: 5px 0 2px; }
.group { display: flex; flex-direction: column; flex: none; background: linear-gradient(#ababab, #ababab) right top / 1px 128px no-repeat; }
.g-clip { width: 138px; }
.g-font { width: 370px; }
.g-align { width: 357px; }
.g-num { width: 212px; }
.g-style { width: 292px; }
.g-cell { width: 210px; }
.g-edit { width: 270px; }
.body { display: flex; height: 110px; padding-left: 12px; }
.rows { display: flex; flex-direction: column; padding-top: 11px; gap: 11px; }
.r1 { display: flex; height: 35px; align-items: center; }
.r2 { display: grid; height: 34px; align-items: center; justify-items: center; }
.glabel { display: flex; height: 22px; line-height: 20px; align-items: center; }
.glabel span { flex: 1; text-align: center; height: 22px; }
.launch { width: 27px; padding: 4px 0 0 4px; }
.big { flex-direction: column; justify-content: flex-start; padding-top: 6px; line-height: 23px; white-space: nowrap; }
.big > span { margin-top: 4px; }
.big > .ar { margin: 10px 0 0 5px; }
.big span .ar { margin: 0 0 5px 1px; }
.g-clip .body { padding-left: 20px; gap: 8px; }
.paste { width: 49px; color: #b1b1b1; }
.paste .ar { background: #c0c0c0; }
.stack > div { display: grid; grid-template-columns: 26px 18px; height: 34px; align-items: center; justify-items: center; }
.g-clip .stack > div { grid-template-columns: 24px 28px; height: 35px; }
.combo { display: grid; height: 35px; border: 1px solid #ababab; background: #fff; align-items: center; }
.combo select { appearance: none; grid-area: 1 / 1; padding-left: 2px; height: 33px; }
.combo .ar { grid-area: 1 / 1; justify-self: end; margin-right: 7px; pointer-events: none; }
.c-font { width: 225px; }
.c-size { width: 58px; margin-left: -1px; }
.c-size select { font-size: 20px; }
.c-num { width: 188px; }
.grow { margin-left: 6px; margin-right: 5px; }
.ltr { font-family: "Noto Sans", sans-serif; font-weight: 600; fill: #555; }
.ltr.reg { font-weight: 400; }
.font2 { grid-template-columns: 31px 32px 33px 20px 6px 36px 14px 14px 28px 22px 30px 20px 8px 35px 14px; }
.b, .it, .u { font-weight: 700; font-size: 22px; color: #555; }
.it { font-family: "Liberation Serif", serif; font-style: italic; font-size: 24px; }
.u { text-decoration: underline; font-weight: 600; font-size: 20px; }
.wen { flex-direction: column; font-size: 13px; line-height: 13px; }
.wen b { font-size: 15px; line-height: 16px; color: #4a80b8; }
.al { display: grid; grid-template-columns: 32px 32px 32px 8px 34px 10px; justify-items: center; }
.al.al2 { grid-template-columns: 32px 32px 32px 8px 34px 30px; }
.sel { width: 32px; height: 34px; background: #c6c6c6; border: 1px solid #8a8a8a; }
.vs.tall { height: 86px; margin: 9px 10px 0 7px; }
.wide, .wide.r2 { display: flex; gap: 4px; justify-content: flex-start; }
.wide .ar { margin-left: 10px; }
.num2 { grid-template-columns: 31px 20px 32px 32px 8px 34px 30px; }
.pct { font-size: 24px; color: #555; }
.g-style .body { display: grid; grid-template-columns: 80px 92px 96px; padding-left: 11px; }
.g-style svg { margin-left: 3px; }
.g-cell .body { display: grid; grid-template-columns: 62px 62px 62px; }
.g-edit .body { display: grid; grid-template-columns: 50px 94px 100px; padding-left: 15px; }
.az { font-family: "Noto Sans", sans-serif; }
.collapse { margin-left: auto; align-self: flex-end; padding: 0 12px 2px 0; }

/* formula bar */
.fbar { display: flex; flex: none; height: 67px; padding: 15px 7px 15px; }
.namebox, .fx, .formula { display: flex; align-items: center; height: 37px; border: 1px solid #c6c6c6; background: #fdfdfd; }
.namebox { width: 152px; padding: 0 10px 0 6px; color: #444; }
.namebox input { flex: 1; font-size: 19px; }
.dots { width: 3px; height: 15px; background: repeating-linear-gradient(#b0b0b0 0 3px, transparent 3px 6px); }
.fbar .dots { margin: 11px 22px 0 20px; }
.fx { width: 164px; justify-content: space-around; margin-right: 4px; }
.fxi { font: italic 700 26px/28px "Liberation Serif", serif; color: #666; }
.fxi sub { font-size: 20px; vertical-align: baseline; }
.formula { flex: 1; padding-right: 7px; }
.formula input { flex: 1; }

/* worksheet */
.sheet { flex: 1; min-height: 0; display: flex; }
.gridwin { flex: 1; min-width: 0; overflow: hidden; border-right: 1px solid #9b9b9b; border-bottom: 1px solid #9b9b9b; background: #fff; }
table { table-layout: fixed; border-collapse: separate; border-spacing: 0; width: 1931px; font: 21px/24px "Noto Sans CJK SC", sans-serif; color: #000; }
.rh { width: 43px; } .ca { width: 82px; } .cb { width: 65px; } .cc { width: 69px; } .cd { width: 104px; } .ce { width: 320px; }
th { font-weight: 350; background: #e6e6e6; padding: 0; border-right: 1px solid #9b9b9b; border-bottom: 1px solid #b5b5b5; vertical-align: bottom; font-size: 20px; }
thead th { height: 28px; border-right-color: #bdbdbd; border-bottom-color: #9b9b9b; }
.corner svg { margin: 0 0 3px 19px; }
th.on { background: #d2d2d2; color: #217346; }
thead th.on { border-bottom: 2px solid #217346; }
tbody th.on { border-right: 2px solid #217346; }
td { height: 28px; padding: 0 0 1px; text-align: center; font-weight: 300; border-right: 1px solid #d4d4d4; border-bottom: 1px solid #d4d4d4; vertical-align: bottom; }
.head td { height: 42px; font-weight: 700; vertical-align: middle; padding-bottom: 2px; }
.k { border-color: #000; }
.k.open { border-right-color: #d4d4d4; }
.active { position: relative; }
.active::before { content: ""; position: absolute; inset: -2px; border: 2px solid #217346; }
.active::after { content: ""; position: absolute; right: -4px; bottom: -4px; width: 7px; height: 7px; background: #217346; border: solid #fff; border-width: 1px 0 0 1px; }
.vscroll { width: 30px; padding: 1px 3px 0 2px; margin-bottom: -2px; display: flex; flex-direction: column; flex: none; }
.vscroll button { height: 25px; flex: none; }
.vscroll button, .hscroll button, .thumb { background: #fff; border: 1px solid #ababab; }
.vscroll .thumb { flex: 19; }
.track { background: #dadada; flex: 1; }

.sheetbar { display: flex; flex: none; height: 33px; border-bottom: 1px solid #c6c6c6; align-items: flex-start; padding-right: 29px; }
.nav { width: 34px; height: 32px; }
.nav:first-child { margin-left: 15px; }
.tl, .tr { width: 6px; height: 12px; background: #bdbdbd; clip-path: polygon(100% 0, 100% 100%, 0 50%); }
.tr { clip-path: polygon(0 0, 100% 50%, 0 100%); }
.dk { background: #666; }
.stab { height: 30px; width: 93px; margin-left: 32px; background: #fff; color: #217346; border: 1px solid #ababab; border-width: 0 1px; box-shadow: inset 0 -2px #217346; font-size: 20px; padding-bottom: 6px; }
.add { margin: 4px 0 0 37px; }
.sheetbar .dots { margin: 8px 17px 0 auto; }
.hscroll { display: flex; flex: 0 0 724px; height: 25px; margin-top: 3px; }
.hscroll button { width: 25px; flex: none; }
.hscroll .thumb { flex: 15; border-left: 0; }

.status { display: flex; flex: none; height: 32px; align-items: center; background: #f3f3f3; padding: 0 13px 0 11px; }
.macro { margin-left: 27px; margin-right: auto; }
.view { width: 60px; height: 32px; }
.view.on { background: #c6c6c6; }
.zm { margin: 0 8px; }
.status input { appearance: none; width: 148px; height: 16px; background: linear-gradient(#a6a6a6, #a6a6a6) center / 100% 2px no-repeat; }
.status input::-webkit-slider-thumb { appearance: none; width: 8px; height: 15px; background: #666; }
.pc { margin-left: 10px; width: 47px; font-size: 19px; }

/* taskbar */
.taskbar { display: flex; flex: none; height: 60px; background: #1e2425; }
.taskbar button { width: 72px; }
.taskbar .app { width: 73px; margin: 0 1px; }
.tsep { width: 5px; height: 36px; margin: 12px 17px 0 9px; border: solid #4d5253; border-width: 0 1px; }
.app.run { background: linear-gradient(#76b9ed, #76b9ed) center bottom / 61px 3px no-repeat; }
.app.cur { background: linear-gradient(#76b9ed, #76b9ed) center bottom / 100% 3px no-repeat #4d5253; }
.logo { font: 700 16px "Noto Sans", sans-serif; fill: #fff; }
.tray { margin-left: auto; display: flex; align-items: center; gap: 14px; padding-right: 284px; }
.mi { margin-right: 9px; }

/* layers over the window */
.mosaic, .mark, .meter { position: absolute; right: 0; pointer-events: none; }
.mosaic { bottom: 0; }
.mark { right: 90px; bottom: 30px; opacity: .85; }
.meter { bottom: 296px; }
.wm > * { fill: #fff; stroke: #fff; stroke-width: 2px; filter: drop-shadow(0 0 1px #777) drop-shadow(0 0 1px #bbb); }
.wm .w1 { font: 700 77px "Liberation Sans", sans-serif; }
.wm .w2 { font: 700 48px "Liberation Sans", sans-serif; stroke-width: 1px; }
.wm .w3 { font: 900 59px "Noto Sans CJK SC", sans-serif; stroke-width: 1px; }
.wm .w4 { font: 500 39px "Noto Sans", "Open Sans", sans-serif; stroke: none; }
```
